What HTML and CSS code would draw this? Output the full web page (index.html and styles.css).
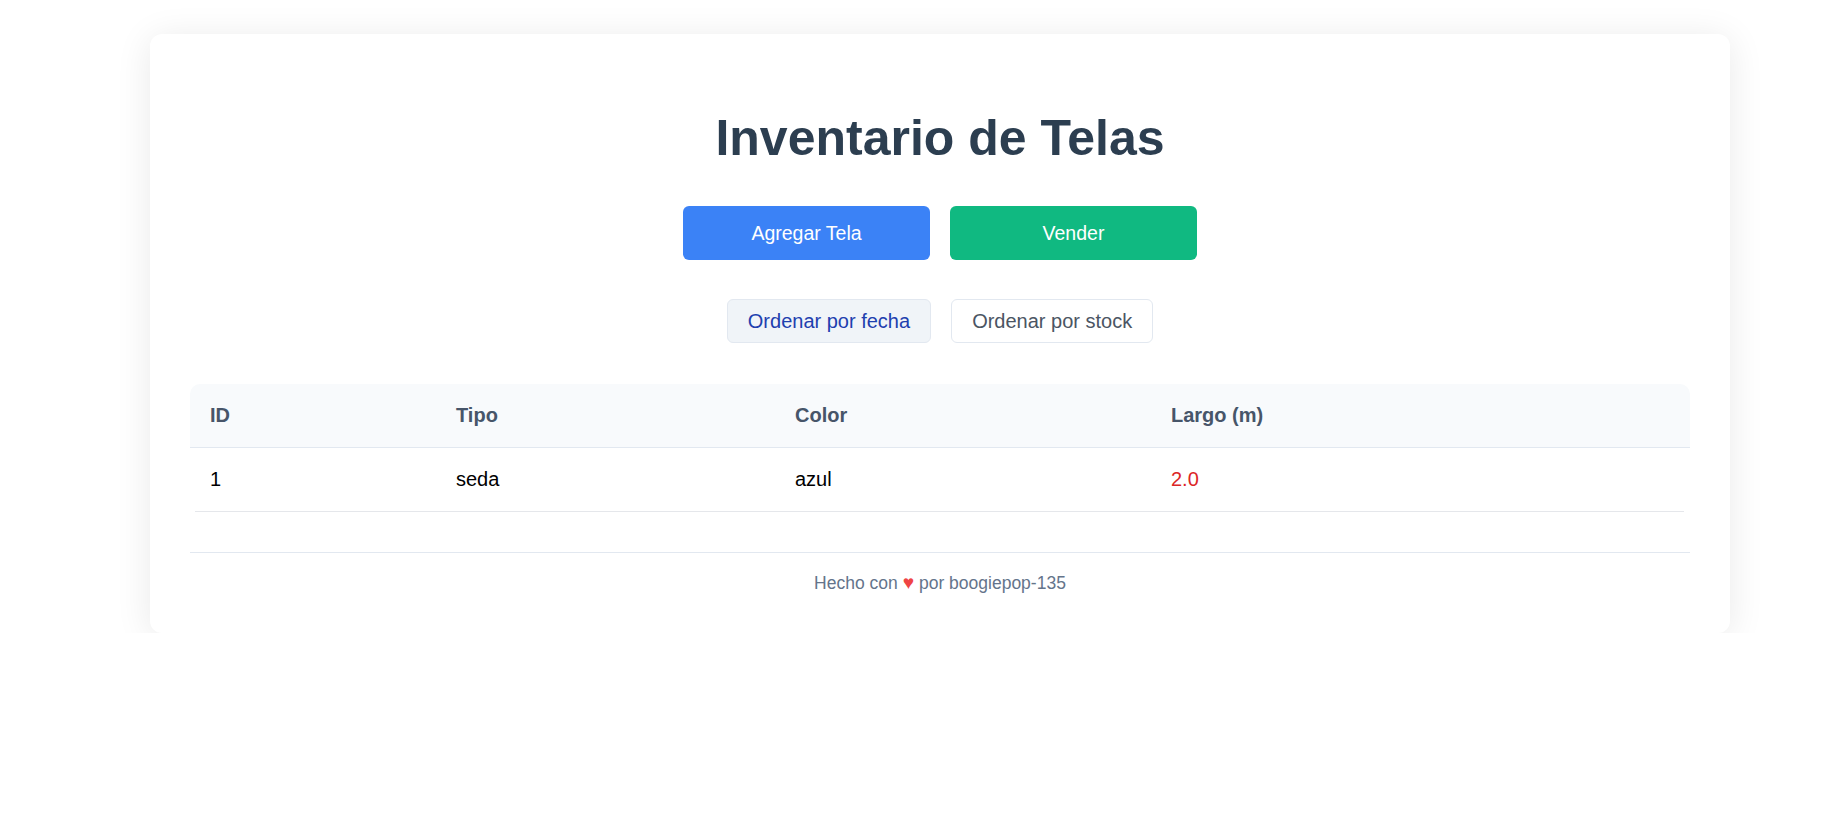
FILE: index.html
```html
<!DOCTYPE html>
<html lang="es">
<head>
<meta charset="utf-8">
<title>Inventario de Telas</title>
<link rel="stylesheet" href="styles.css">
</head>
<body>
<div class="page">
  <main class="card">
    <h1 class="title">Inventario de Telas</h1>
    <div class="actions">
      <button class="btn btn-primary">Agregar Tela</button>
      <button class="btn btn-success">Vender</button>
    </div>
    <div class="sorts">
      <button class="sort sort-active">Ordenar por fecha</button>
      <button class="sort">Ordenar por stock</button>
    </div>
    <div class="table">
      <div class="thead">
        <div class="cell">ID</div>
        <div class="cell">Tipo</div>
        <div class="cell">Color</div>
        <div class="cell">Largo (m)</div>
      </div>
      <div class="trow">
        <div class="cell">1</div>
        <div class="cell">seda</div>
        <div class="cell">azul</div>
        <div class="cell low">2.0</div>
      </div>
    </div>
    <footer class="footer">Hecho con <span class="heart">♥</span> por boogiepop-135</footer>
  </main>
</div>
</body>
</html>
```

FILE: styles.css
```css
html, body {
  margin: 0;
  padding: 0;
  background: #ffffff;
}

body {
  font-family: "Liberation Sans", Arial, sans-serif;
  font-size: 20px;
  color: #000000;
}

.page {
  padding: 34px 91px 0 150px;
}

.card {
  background: #ffffff;
  border-radius: 12px;
  box-shadow: 0 4px 36px rgba(0, 0, 0, 0.09);
  padding: 40px;
}

.title {
  margin: 34px 0 38px;
  font-size: 50px;
  line-height: 60px;
  font-weight: 700;
  text-align: center;
  color: #2c3e50;
}

.actions {
  display: flex;
  justify-content: center;
  gap: 20px;
  margin-bottom: 39px;
}

.btn {
  width: 247px;
  height: 54px;
  border: none;
  border-radius: 6px;
  font-family: "Liberation Sans", Arial, sans-serif;
  font-size: 19.5px;
  color: #ffffff;
  cursor: pointer;
}

.btn-primary {
  background: #3b82f6;
}

.btn-success {
  background: #10b981;
}

.sorts {
  display: flex;
  justify-content: center;
  gap: 20px;
  margin-bottom: 41px;
}

.sort {
  height: 44px;
  padding: 0 20px;
  border: 1px solid #e2e8f0;
  border-radius: 6px;
  background: #ffffff;
  font-family: "Liberation Sans", Arial, sans-serif;
  font-size: 20px;
  color: #4b5563;
  cursor: pointer;
}

.sort-active {
  background: #f0f4f8;
  color: #1e40af;
}

.table {
  margin-bottom: 40px;
}

.thead,
.trow {
  display: grid;
  grid-template-columns: 246px 339px 376px 1fr;
}

.thead {
  background: #f8fafc;
  border-radius: 10px 10px 0 0;
  border-bottom: 1px solid #e2e8f0;
  font-weight: 700;
  color: #475569;
}

.trow {
  margin: 0 6px 0 5px;
  grid-template-columns: 241px 339px 376px 1fr;
  border-bottom: 1px solid #e5e7eb;
}

.cell {
  padding: 20px;
  line-height: 23px;
}

.trow .cell:first-child {
  padding-left: 15px;
}

.low {
  color: #dc2626;
}

.footer {
  border-top: 1px solid #e2e8f0;
  padding-top: 20px;
  text-align: center;
  font-size: 17.5px;
  line-height: 20px;
  color: #64748b;
}

.heart {
  color: #ef4444;
  font-size: 1.1em;
}
```
